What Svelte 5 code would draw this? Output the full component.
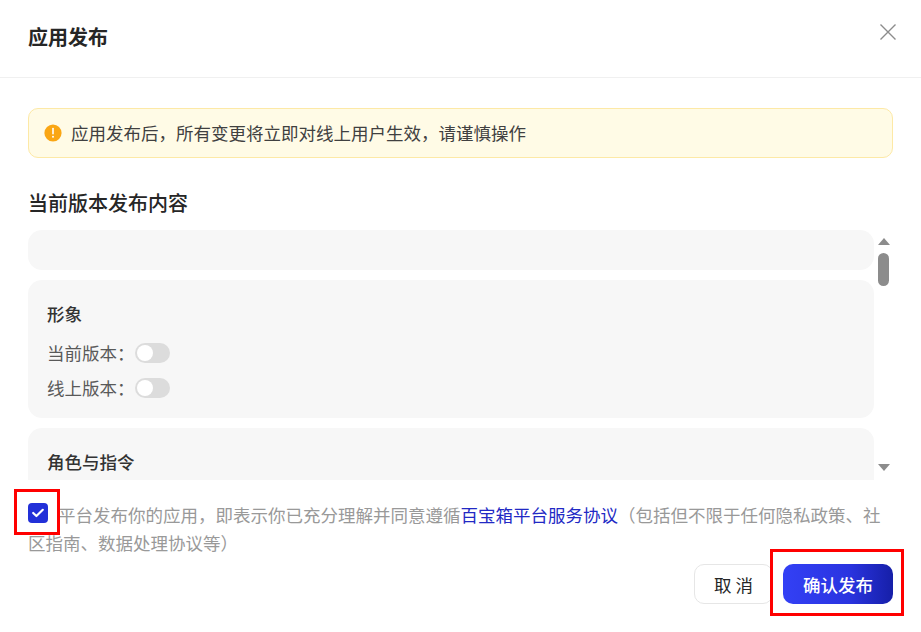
<script>
  let agreed = $state(true);

  const sections = [
    { title: '形象', rows: ['当前版本：', '线上版本：'] },
    { title: '角色与指令', rows: [] }
  ];
</script>

<div class="modal">
  <header class="head">
    <h2>应用发布</h2>
    <button class="close" aria-label="关闭">
      <svg width="18" height="18" viewBox="0 0 18 18"><path d="M1.5 1.5 16.5 16.5M16.5 1.5 1.5 16.5" stroke="#8c8c8c" stroke-width="1.4" fill="none" /></svg>
    </button>
  </header>

  <div class="body">
    <div class="alert">
      <svg width="18" height="18" viewBox="0 0 18 18">
        <circle cx="9" cy="9" r="8.6" fill="#faa613" />
        <path d="M9 4.6v5.2" stroke="#fff" stroke-width="1.6" stroke-linecap="round" />
        <circle cx="9" cy="12.7" r="1" fill="#fff" />
      </svg>
      <span>应用发布后，所有变更将立即对线上用户生效，请谨慎操作</span>
    </div>

    <h3>当前版本发布内容</h3>

    <div class="scroll">
      <div class="list">
        <div class="card empty"></div>
        {#each sections as s}
          <div class="card">
            <div class="card-title">{s.title}</div>
            {#each s.rows as r}
              <div class="row">
                <span>{r}</span>
                <span class="switch"><i></i></span>
              </div>
            {/each}
          </div>
        {/each}
      </div>
      <div class="bar">
        <span class="arrow up"></span>
        <span class="thumb"></span>
        <span class="arrow down"></span>
      </div>
    </div>
  </div>

  <footer class="foot">
    <p class="agree">
      <label class="check">
        <input type="checkbox" bind:checked={agreed} />
        <svg width="14" height="12" viewBox="0 0 14 12"><path d="M2.2 6 5.4 9 11.8 2.8" stroke="#fff" stroke-width="2.2" fill="none" stroke-linecap="round" stroke-linejoin="round" /></svg>
      </label>平台发布你的应用，即表示你已充分理解并同意遵循<a href="#terms">百宝箱平台服务协议</a>（包括但不限于任何隐私政策、社区指南、数据处理协议等）
    </p>
    <div class="actions">
      <button class="btn cancel">取 消</button>
      <button class="btn ok">确认发布</button>
    </div>
  </footer>

  <div class="mark mark-check"></div>
  <div class="mark mark-btn"></div>
</div>

<style>
  :global(body) {
    background: #fff;
  }

  .modal {
    position: relative;
    width: 921px;
    height: 632px;
    background: #fff;
    display: flex;
    flex-direction: column;
    overflow: hidden;
    font-family: "Noto Sans CJK SC", "Liberation Sans", sans-serif;
    font-size: 17.5px;
    color: #333;
  }

  .head {
    height: 77px;
    flex: none;
    display: flex;
    align-items: center;
    justify-content: space-between;
    padding: 0 24px 0 28px;
    border-bottom: 1px solid #f0f0f0;
  }

  h2 {
    margin: 0 0 4px;
    font-size: 20px;
    font-weight: 700;
    color: #262626;
  }

  .close {
    border: 0;
    background: none;
    padding: 0;
    display: flex;
    margin-top: -14px;
  }

  .body {
    flex: none;
    padding: 30px 0 0 28px;
  }

  .alert {
    width: 865px;
    height: 50px;
    box-sizing: border-box;
    display: flex;
    align-items: center;
    gap: 9px;
    padding: 0 15px;
    background: #fffbe6;
    border: 1px solid #fde9a6;
    border-radius: 10px;
    color: #404040;
  }

  .alert span {
    margin-bottom: 2px;
  }

  h3 {
    margin: 0;
    padding-top: 30px;
    height: 72px;
    box-sizing: border-box;
    font-size: 20px;
    line-height: 30px;
    font-weight: 500;
    color: #262626;
  }

  .scroll {
    display: flex;
    height: 250px;
    overflow: hidden;
  }

  .list {
    width: 846px;
    display: flex;
    flex-direction: column;
    gap: 10px;
    flex: none;
  }

  .card {
    flex: none;
    background: #f7f7f7;
    border-radius: 14px;
    padding: 19px 19px 13px;
  }

  .card.empty {
    height: 40px;
    padding: 0;
    box-sizing: border-box;
  }

  .card-title {
    line-height: 30px;
    height: 30px;
    margin-bottom: 6px;
    font-weight: 500;
    font-size: 17.5px;
    color: #333;
  }

  .row {
    display: flex;
    align-items: center;
    height: 35px;
    color: #595959;
  }

  .switch {
    width: 35px;
    height: 20px;
    background: #dcdcdc;
    border-radius: 10px;
    display: flex;
    align-items: center;
    padding: 0 2px;
    box-sizing: border-box;
  }

  .switch i {
    width: 16px;
    height: 16px;
    border-radius: 50%;
    background: #fff;
  }

  .bar {
    width: 13px;
    margin-left: 3px;
    display: flex;
    flex-direction: column;
    align-items: center;
  }

  .arrow {
    width: 0;
    height: 0;
    border-left: 6.5px solid transparent;
    border-right: 6.5px solid transparent;
  }

  .arrow.up {
    margin-top: 8px;
    border-bottom: 7px solid #8c8c8c;
  }

  .arrow.down {
    margin-top: auto;
    margin-bottom: 9px;
    border-top: 7px solid #8c8c8c;
  }

  .thumb {
    width: 11px;
    height: 33px;
    margin-top: 8px;
    background: #8c8c8c;
    border-radius: 6px;
  }

  .foot {
    padding: 21px 28px 0;
  }

  .agree {
    margin: 0;
    line-height: 28px;
    color: #999;
  }

  .agree a {
    color: #2229c4;
    text-decoration: none;
  }

  .check {
    display: inline-flex;
    align-items: center;
    justify-content: center;
    width: 20px;
    height: 20px;
    margin-right: 10px;
    background: #2230d8;
    border-radius: 4px;
    vertical-align: 3px;
    position: relative;
  }

  .check input {
    position: absolute;
    inset: 0;
    margin: 0;
    opacity: 0;
  }

  .actions {
    display: flex;
    justify-content: flex-end;
    gap: 10px;
    margin-top: 7px;
  }

  .btn {
    height: 40px;
    border-radius: 10px;
    font: inherit;
    padding: 0;
  }

  .cancel {
    width: 79px;
    background: #fff;
    border: 1px solid #e6e6e6;
    color: #262626;
  }

  .ok {
    width: 110px;
    border: 0;
    color: #fff;
    font-weight: 500;
    background: linear-gradient(90deg, #3340f5 0%, #2a34e0 60%, #161fa8 100%);
  }

  .mark {
    position: absolute;
    border: 3px solid #f00;
    box-sizing: border-box;
    pointer-events: none;
  }

  .mark-check {
    left: 14px;
    top: 489px;
    width: 46px;
    height: 46px;
  }

  .mark-btn {
    left: 770px;
    top: 549px;
    width: 134px;
    height: 67px;
  }
</style>
